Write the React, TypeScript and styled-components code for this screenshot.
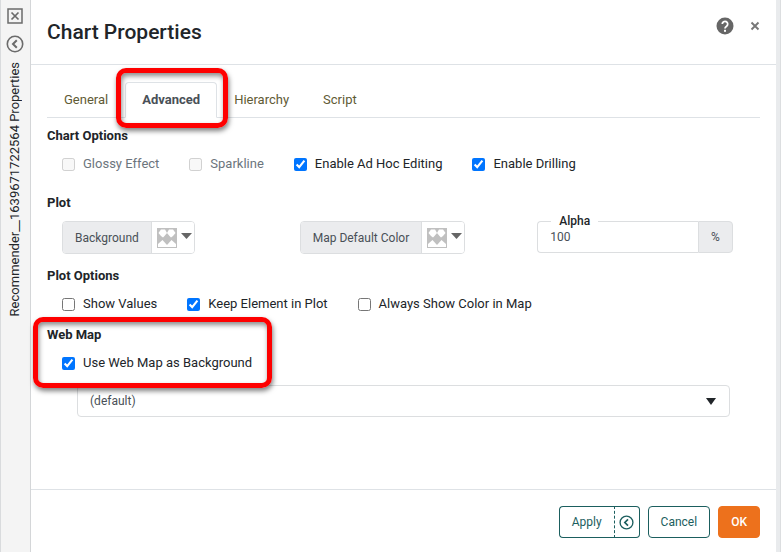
import React from "react";
import styled, { createGlobalStyle } from "styled-components";

const GlobalStyle = createGlobalStyle`
  *, *::before, *::after { box-sizing: border-box; }
  body {
    margin: 0;
    background: #fff;
    color: #212529;
    font: 13px/20px Roboto, "Liberation Sans", sans-serif;
  }
  button, input, select { font: inherit; }
`;

const Layout = styled.div`
  display: flex;
  min-height: 100vh;
  border-left: 1px solid #d9dbdd;
`;

const SideRail = styled.aside`
  display: flex;
  flex-direction: column;
  align-items: center;
  flex: none;
  width: 30px;
  padding: 6px 1px 0 0;
  gap: 8px;
  background: #f4f4f4;
  border-right: 1px solid #d4d6d8;
`;

const IconButton = styled.button`
  display: flex;
  align-items: center;
  height: 20px;
  padding: 0;
  border: 0;
  background: none;
  color: #6b6b6b;
  cursor: pointer;
`;

const RailLabel = styled.span`
  writing-mode: vertical-rl;
  transform: rotate(180deg);
  white-space: nowrap;
  line-height: 20px;
`;

const Dialog = styled.main`
  display: flex;
  flex-direction: column;
  flex: 1;
  min-width: 0;
  border-right: 4px solid #e9ebed;
`;

const EdgeLine = styled.div`
  width: 1px;
  background: #dcdee0;
`;

const Header = styled.header`
  display: flex;
  justify-content: space-between;
  align-items: flex-start;
  padding: 16px;
  border-bottom: 1px solid #dee2e6;
`;

const Title = styled.h1`
  margin: 0;
  font-size: 21px;
  line-height: 32px;
  font-weight: 500;
`;

const HeaderActions = styled.div`
  display: flex;
  align-items: center;
  gap: 16px;
`;

const Body = styled.div`
  flex: 1;
  padding: 17px 16px 24px;
`;

const Tabs = styled.div`
  display: flex;
  border-bottom: 1px solid #dee2e6;
  margin-bottom: 8px;
`;

const Tab = styled.button<{ $active?: boolean }>`
  position: relative;
  height: 36px;
  margin-bottom: -1px;
  padding: 0 16px;
  border: 1px solid;
  border-color: ${(p) => (p.$active ? "#dee2e6 #dee2e6 #fff" : "transparent")};
  border-radius: 4px 4px 0 0;
  background: ${(p) => (p.$active ? "#fff" : "transparent")};
  color: ${(p) => (p.$active ? "#495057" : "#5f5b35")};
  font-weight: ${(p) => (p.$active ? 700 : 400)};
  cursor: pointer;
`;

const Highlight = styled.span<{ $area: string }>`
  position: absolute;
  inset: ${(p) => p.$area};
  z-index: 1;
  border: 5px solid #fe0000;
  border-radius: 10px;
  box-shadow: 1px 3px 5px rgba(0, 0, 0, 0.5), inset 1px 3px 5px rgba(0, 0, 0, 0.45);
  pointer-events: none;
`;

const Section = styled.section<{ $space: number }>`
  margin-bottom: ${(p) => p.$space}px;
`;

const SectionTitle = styled.h2`
  margin: 0 0 8px;
  font-size: 13px;
  line-height: 20px;
  font-weight: 700;
`;

const CheckRow = styled.div`
  display: flex;
  flex-wrap: wrap;
  gap: 8px 30px;
  padding-left: 15px;
`;

const CheckLabel = styled.label<{ $muted?: boolean }>`
  display: flex;
  align-items: center;
  gap: 8px;
  color: ${(p) => (p.$muted ? "#6c757d" : "#212529")};
`;

const CheckInput = styled.input`
  width: 13px;
  height: 13px;
  margin: 0;
`;

const PlotGrid = styled.div`
  display: grid;
  grid-template-columns: repeat(3, 1fr);
  font-size: 12px;
`;

const PlotCell = styled.div`
  display: flex;
  padding-left: 15px;
`;

const ColorGroup = styled.div`
  display: flex;
  height: 33px;
  border: 1px solid #dcdee0;
  border-radius: 4px;
  overflow: hidden;
`;

const Addon = styled.span`
  display: flex;
  align-items: center;
  padding: 0 12px;
  background: #ebecee;
  border-right: 1px solid #dcdee0;
  color: #495057;
`;

const ColorButton = styled.button`
  display: flex;
  align-items: center;
  gap: 4px;
  padding: 0 2px 0 5px;
  border: 0;
  background: #fff;
  cursor: pointer;
`;

const AlphaGroup = styled.div`
  position: relative;
  display: flex;
  flex: 1;
  height: 32px;
  margin-right: 27px;
`;

const AlphaLabel = styled.label`
  position: absolute;
  top: -8px;
  left: 14px;
  padding: 0 8px;
  background: #fff;
  line-height: 16px;
  font-weight: 500;
`;

const AlphaInput = styled.input`
  flex: 1;
  width: 0;
  padding: 0 12px;
  border: 1px solid #dcdee0;
  border-right: 0;
  border-radius: 4px 0 0 4px;
  color: #495057;
`;

const Unit = styled.span`
  display: flex;
  align-items: center;
  justify-content: center;
  width: 35px;
  border: 1px solid #dcdee0;
  border-radius: 0 4px 4px 0;
  background: #ebecee;
  color: #495057;
`;

const WebMapBlock = styled.div`
  position: relative;
  width: fit-content;
`;

const SelectWrap = styled.div`
  display: flex;
  align-items: center;
  margin: 12px 30px 0;
`;

const MapSelect = styled.select`
  appearance: none;
  flex: 1;
  height: 32px;
  padding: 0 12px;
  border: 1px solid #dcdee0;
  border-radius: 4px;
  background: #fff;
  color: #495057;
  font-size: 12px;
`;

const SelectArrow = styled.svg`
  margin-left: -24px;
  margin-right: 14px;
  pointer-events: none;
`;

const Footer = styled.footer`
  display: flex;
  justify-content: flex-end;
  gap: 8px;
  padding: 16px 16px 14px;
  border-top: 1px solid #dee2e6;
  font-size: 12px;
`;

const Button = styled.button<{ $primary?: boolean }>`
  height: 32px;
  padding: 0 12px;
  border: 1px solid ${(p) => (p.$primary ? "#ed711c" : "#1b5e5e")};
  border-radius: 4px;
  background: ${(p) => (p.$primary ? "#ed711c" : "#fff")};
  color: ${(p) => (p.$primary ? "#fff" : "#1b5e5e")};
  font-weight: ${(p) => (p.$primary ? 500 : 400)};
  cursor: pointer;
`;

const ButtonGroup = styled.div`
  display: flex;
`;

const ApplyButton = styled(Button)`
  border-right: 0;
  border-radius: 4px 0 0 4px;
`;

const CollapseButton = styled(Button)`
  display: flex;
  align-items: center;
  width: 26px;
  padding: 0 4px;
  border-left: 1px dashed #1b5e5e;
  border-radius: 0 4px 4px 0;
`;

function CircleChevron({ size }: { size: number }) {
  return (
    <svg width={size} height={size} viewBox="0 0 18 18" fill="none" stroke="currentColor" strokeWidth="1.6">
      <circle cx="9" cy="9" r="7.7" />
      <path d="M10.8 5.2 7 9l3.8 3.8" strokeWidth="2" />
    </svg>
  );
}

function Swatch() {
  return (
    <svg width="20" height="20" viewBox="0 0 20 20">
      <rect width="20" height="20" fill="#c0c0c0" />
      <g fill="#fff">
        <path d="M4 1.500h4L10 5 7.500 8 6 9.500 4 8 1.500 5Z" />
        <path d="M16 1.500h-4L10 5l2.500 3L14 9.500 16 8l2.500-3Z" />
        <path d="M5.500 12 10 17v2H1v-3Z" />
        <path d="M14.500 12 10 17v2h9v-3Z" />
      </g>
    </svg>
  );
}

function ColorPicker({ label }: { label: string }) {
  return (
    <ColorGroup>
      <Addon>{label}</Addon>
      <ColorButton aria-label={`${label} color`}>
        <Swatch />
        <svg width="11" height="12" viewBox="0 0 11 12">
          <path d="M0 1h11L5.500 7Z" fill="#666" />
        </svg>
      </ColorButton>
    </ColorGroup>
  );
}

function Check({ label, checked, disabled }: { label: string; checked?: boolean; disabled?: boolean }) {
  return (
    <CheckLabel $muted={disabled}>
      <CheckInput type="checkbox" defaultChecked={checked} disabled={disabled} />
      {label}
    </CheckLabel>
  );
}

export default function App() {
  return (
    <>
      <GlobalStyle />
      <Layout>
        <SideRail>
          <IconButton aria-label="Close panel">
            <svg width="16" height="16" viewBox="0 0 16 16" fill="none" stroke="currentColor">
              <rect x="1" y="1" width="14" height="14" strokeWidth="1.500" />
              <path d="m4.500 4.500 7 7m0-7-7 7" strokeWidth="1.700" />
            </svg>
          </IconButton>
          <IconButton aria-label="Collapse panel">
            <CircleChevron size={18} />
          </IconButton>
          <RailLabel>Recommender__1639671722564 Properties</RailLabel>
        </SideRail>
        <Dialog>
          <Header>
            <Title>Chart Properties</Title>
            <HeaderActions>
              <IconButton aria-label="Help">
                <svg width="18" height="18" viewBox="0 0 18 18">
                  <circle cx="9" cy="9" r="8.500" fill="#666" />
                  <path d="M6.300 7.100a2.700 2.700 0 1 1 4.300 2.100C9.500 10 9 10.400 9 11.500" fill="none" stroke="#fff" strokeWidth="1.800" />
                  <rect x="8" y="12.800" width="2" height="2" fill="#fff" />
                </svg>
              </IconButton>
              <IconButton aria-label="Close">
                <svg width="10" height="10" viewBox="0 0 10 10" stroke="#777" strokeWidth="1.900">
                  <path d="m1.500 1.500 7 7m0-7-7 7" />
                </svg>
              </IconButton>
            </HeaderActions>
          </Header>
          <Body>
            <Tabs role="tablist">
              <Tab role="tab">General</Tab>
              <Tab role="tab" aria-selected $active>
                Advanced
                <Highlight $area="-15px -12px -11px -10px" />
              </Tab>
              <Tab role="tab">Hierarchy</Tab>
              <Tab role="tab">Script</Tab>
            </Tabs>
            <Section $space={19}>
              <SectionTitle>Chart Options</SectionTitle>
              <CheckRow>
                <Check label="Glossy Effect" disabled />
                <Check label="Sparkline" disabled />
                <Check label="Enable Ad Hoc Editing" checked />
                <Check label="Enable Drilling" checked />
              </CheckRow>
            </Section>
            <Section $space={12}>
              <SectionTitle>Plot</SectionTitle>
              <PlotGrid>
                <PlotCell>
                  <ColorPicker label="Background" />
                </PlotCell>
                <PlotCell>
                  <ColorPicker label="Map Default Color" />
                </PlotCell>
                <PlotCell>
                  <AlphaGroup>
                    <AlphaInput id="alpha" defaultValue="100" />
                    <AlphaLabel htmlFor="alpha">Alpha</AlphaLabel>
                    <Unit>%</Unit>
                  </AlphaGroup>
                </PlotCell>
              </PlotGrid>
            </Section>
            <Section $space={11}>
              <SectionTitle>Plot Options</SectionTitle>
              <CheckRow>
                <Check label="Show Values" />
                <Check label="Keep Element in Plot" checked />
                <Check label="Always Show Color in Map" />
              </CheckRow>
            </Section>
            <Section $space={0}>
              <WebMapBlock>
                <SectionTitle>Web Map</SectionTitle>
                <CheckRow>
                  <Check label="Use Web Map as Background" checked />
                </CheckRow>
                <Highlight $area="-8px -20px -15px -14px" />
              </WebMapBlock>
              <SelectWrap>
                <MapSelect aria-label="Web map style" defaultValue="(default)">
                  <option>(default)</option>
                </MapSelect>
                <SelectArrow width="10" height="8" viewBox="0 0 10 8">
                  <path d="M0 1h10L5 8Z" fill="#212529" />
                </SelectArrow>
              </SelectWrap>
            </Section>
          </Body>
          <Footer>
            <ButtonGroup>
              <ApplyButton>Apply</ApplyButton>
              <CollapseButton aria-label="Apply and collapse">
                <CircleChevron size={15} />
              </CollapseButton>
            </ButtonGroup>
            <Button>Cancel</Button>
            <Button $primary>OK</Button>
          </Footer>
        </Dialog>
        <EdgeLine />
      </Layout>
    </>
  );
}
